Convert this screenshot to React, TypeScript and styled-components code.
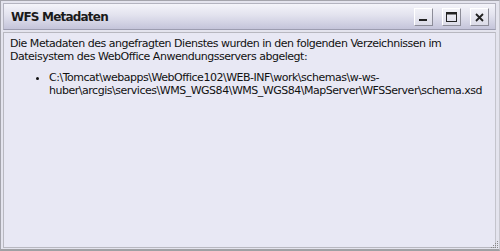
import React from "react";
import styled, { createGlobalStyle } from "styled-components";

const Global = createGlobalStyle`
  html, body { margin: 0; padding: 0; background: #ffffff; }
  body { font-family: "DejaVu Sans", Verdana, sans-serif; }
`;

const Window = styled.div`
  box-sizing: border-box;
  width: 500px;
  height: 251px;
  background: #e4e4ee;
  border-left: 1px solid #a4a4ac;
  border-top: 1px solid #a4a4ac;
  border-right: 1px solid #c8c8d0;
  border-bottom: 2px solid #a0a0a4;
  padding: 2px 3px 1px 2px;
  display: flex;
  flex-direction: column;
  gap: 2px;
  position: relative;
`;

const TitleBar = styled.div`
  box-sizing: border-box;
  height: 27px;
  display: flex;
  align-items: center;
  justify-content: space-between;
  padding: 0 6px 0 7px;
  border: 1px solid #b4b4c0;
  border-bottom-color: #9c9cb0;
  background: linear-gradient(to bottom, #f4f4fa 0%, #e2e2ee 45%, #c4c4da 100%);
`;

const Title = styled.span`
  font-family: "DejaVu Sans", Verdana, sans-serif;
  font-weight: bold;
  font-size: 12px;
  color: #1a1a1a;
  letter-spacing: -0.8px;
`;

const Controls = styled.div`
  display: flex;
  gap: 9px;
  margin-top: 1px;
`;

const CtlButton = styled.div`
  box-sizing: border-box;
  width: 19px;
  height: 18px;
  display: flex;
  align-items: center;
  justify-content: center;
  border-top: 1px solid #ffffff;
  border-left: 1px solid #ffffff;
  border-right: 1px solid #8c8c98;
  border-bottom: 1px solid #8c8c98;
  background: linear-gradient(to bottom, #f2f2f8, #dcdce8);
`;

const Content = styled.div`
  flex: 1;
  box-sizing: border-box;
  border: 1px solid #b8b8c0;
  border-right-color: #c4c4cc;
  background: #e8e8f4;
  padding: 4px 6px;
  font-family: "DejaVu Sans", Verdana, sans-serif;
  font-size: 11px;
  line-height: 13px;
  letter-spacing: -0.48px;
  color: #111111;
`;

const Para = styled.p`
  margin: 0 0 8px 0;
`;

const List = styled.ul`
  margin: 0;
  padding-left: 39px;
  list-style: disc;
`;

const Grip = styled.svg`
  position: absolute;
  right: 0;
  bottom: 0;
`;

export default function App() {
  return (
    <>
      <Global />
      <Window>
        <TitleBar>
          <Title>WFS Metadaten</Title>
          <Controls>
            <CtlButton>
              <svg width="11" height="11" viewBox="0 0 11 11">
                <rect x="1" y="7" width="8" height="2" fill="#222" />
              </svg>
            </CtlButton>
            <CtlButton>
              <svg width="11" height="11" viewBox="0 0 11 11">
                <rect x="0.5" y="0.5" width="10" height="9" fill="none" stroke="#222" />
                <rect x="0.5" y="0.5" width="10" height="2" fill="#222" />
              </svg>
            </CtlButton>
            <CtlButton>
              <svg width="11" height="11" viewBox="0 0 11 11">
                <path d="M2 2 L9 9 M9 2 L2 9" stroke="#222" strokeWidth="1.8" />
              </svg>
            </CtlButton>
          </Controls>
        </TitleBar>
        <Content>
          <Para>
            Die Metadaten des angefragten Dienstes wurden in den folgenden Verzeichnissen im
            Dateisystem des WebOffice Anwendungsservers abgelegt:
          </Para>
          <List>
            <li>
              C:\Tomcat\webapps\WebOffice102\WEB-INF\work\schemas\w-ws-
              huber\arcgis\services\WMS_WGS84\WMS_WGS84\MapServer\WFSServer\schema.xsd
            </li>
          </List>
        </Content>
        <Grip width="8" height="8" viewBox="0 0 8 8">
          <rect x="6" y="0" width="1" height="1" fill="#888" />
          <rect x="4" y="2" width="1" height="1" fill="#888" />
          <rect x="6" y="2" width="1" height="1" fill="#888" />
          <rect x="2" y="4" width="1" height="1" fill="#888" />
          <rect x="4" y="4" width="1" height="1" fill="#888" />
          <rect x="6" y="4" width="1" height="1" fill="#888" />
          <rect x="0" y="6" width="1" height="1" fill="#888" />
          <rect x="2" y="6" width="1" height="1" fill="#888" />
          <rect x="4" y="6" width="1" height="1" fill="#888" />
          <rect x="6" y="6" width="1" height="1" fill="#888" />
        </Grip>
      </Window>
    </>
  );
}
